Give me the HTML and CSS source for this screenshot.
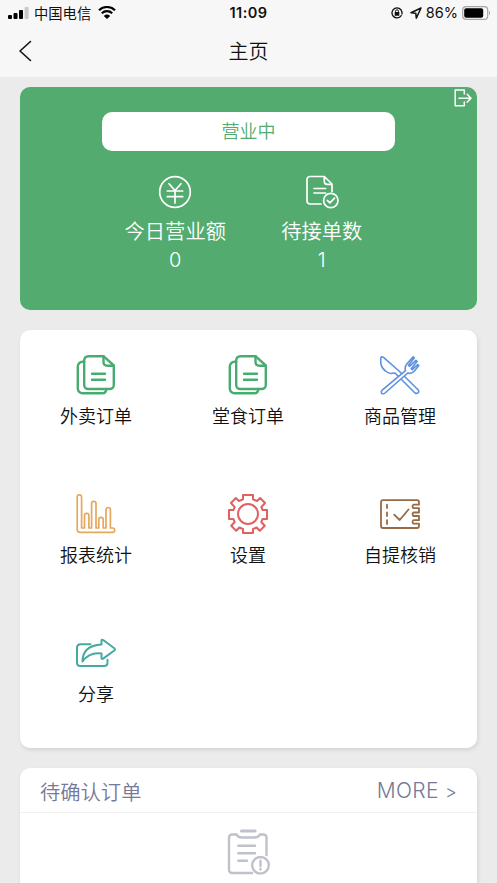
FILE: index.html
```html
<!DOCTYPE html>
<html lang="zh-CN">
<head>
<meta charset="utf-8">
<title>主页</title>
<link rel="stylesheet" href="styles.css">
</head>
<body>
<svg class="defs" width="0" height="0">
  <symbol id="docs" viewBox="0.5 0 40 40">
    <path d="M8.7 6.7H7A4.7 4.7 0 0 0 2.3 11.4V33.6A4.7 4.7 0 0 0 7 38.3H26.5Q30.8 38.3 30.8 34"/>
    <path d="M28 1.2H12.7a4 4 0 0 0-4 4V30a4 4 0 0 0 4 4h21.6a4 4 0 0 0 4-4V10.5Z"/>
    <path d="M28 1.2V7Q28 10.7 32 10.7H38.3M16.5 18.7H29.5M16.5 24.7H29.5"/>
  </symbol>
</svg>
<header class="header">
  <div class="status">
    <div class="carrier">
      <svg class="signal" viewBox="0 0 21 13"><rect x="0" y="9" width="4" height="4" rx="1"/><rect x="5.5" y="7" width="4" height="6" rx="1"/><rect x="11" y="4" width="4" height="9" rx="1"/><rect class="off" x="16.6" y="1" width="4" height="12" rx="1"/></svg>
      <span>中国电信</span>
      <svg class="wifi" viewBox="0 0 18 13"><path d="M1 4.2a11.6 11.6 0 0 1 16 0M3.8 7.3a7.5 7.5 0 0 1 10.4 0"/><path class="solid" d="M5.8 9.9a4.7 4.7 0 0 1 6.4 0L9 13Z"/></svg>
    </div>
    <time>11:09</time>
    <div class="power">
      <svg class="lock" viewBox="0 0 12 12"><path d="M10.2 8.6A5 5 0 1 1 10.9 4.8M11 5v2"/><path class="fine" d="M4.5 5.5V4.3a1.5 1.5 0 0 1 3 0v1.2"/><rect x="3.7" y="5.1" width="4.6" height="3.6" rx=".5"/></svg>
      <svg class="location" viewBox="0 0 12 12"><path d="M11 1 1 5.8l4.8.5.5 4.9Z"/></svg>
      <span>86%</span>
      <svg class="battery" viewBox="0 0 29 14"><rect class="shell" x=".7" y=".7" width="25" height="12.6" rx="3.4"/><rect x="2.2" y="2.2" width="19" height="9.6" rx="2"/><path class="tip" d="M27 4.7q2 2.3 0 4.6Z"/></svg>
    </div>
  </div>
  <nav class="nav">
    <svg class="back" viewBox="0 0 14 22"><path d="M12.5 1.5 2 11l10.5 9.5"/></svg>
    <h1>主页</h1>
  </nav>
</header>
<main class="content">
  <section class="summary">
    <svg class="exit" viewBox="0 0 18 18"><path d="M10.3 5V1H1.2V16.8H10.3V13M5 9.2H16.8M13.2 5.3l3.8 3.9-3.8 3.9"/></svg>
    <div class="open">营业中</div>
    <div class="stats">
      <div class="stat">
        <svg viewBox="0 0 34 34"><circle cx="17" cy="17" r="15.3"/><path d="M11 8.7 17 15.5 23 8.7M17 15.5V28M9.3 16H24.7M9.3 21.7H24.7"/></svg>
        <span>今日营业额</span><span class="value">0</span>
      </div>
      <div class="stat">
        <svg viewBox="0 0 34 34"><path d="M16 29H5a3 3 0 0 1-3-3V4.5a3 3 0 0 1 3-3H19.3L27 9V16.5M19.3 1.5V6.5Q19.3 9.3 22.3 9.3H27M9 13.5H20.5M9 18H20.5"/><circle cx="25.8" cy="25.5" r="7.2"/><path d="m22.3 25.3 2.6 2.6 4.6-4.8"/></svg>
        <span>待接单数</span><span class="value">1</span>
      </div>
    </div>
  </section>
  <section class="menu">
    <div class="item green"><svg><use href="#docs"/></svg><span>外卖订单</span></div>
    <div class="item green"><svg><use href="#docs"/></svg><span>堂食订单</span></div>
    <div class="item blue"><svg viewBox="0 0 40 40"><path d="M1 2.5C0 8 1.5 13 5.5 16Q9 19 12.5 18.3L15 18L35 38Q37 39 38.4 37.5Q39.2 36 38 34.7L19 16 3.5 2.3Q1.8 1 1 2.5Z"/><path class="fork" d="M25.5 15.6 2.2 35.2Q.6 37 1.8 38.3Q3.3 39.4 5 38L27.7 18Q31 19.3 34 16.5L38.8 10.5 37.8 9.5 32.2 14.7 31.2 13.7 37 6.4 35.9 5.3 29.5 11.3 28.5 10.3 34.3 2.8 33.2 1.8 27 8.8Q24.3 12 25.5 15.6Z"/></svg><span>商品管理</span></div>
    <div class="item orange"><svg viewBox="0 0 40 40"><path d="M1.2 3A2.2 2.2 0 0 1 5.6 3V34H8.5V21.5a2.2 2.2 0 0 1 4.4 0V34H15.6V9.5a2.2 2.2 0 0 1 4.4 0V34H22.8V25.5a2.2 2.2 0 0 1 4.4 0V34H30V15.7a2.2 2.2 0 0 1 4.4 0V34H36.5a2.2 2.2 0 0 1 0 4.4H4Q1.2 38.4 1.2 35.6Z"/></svg><span>报表统计</span></div>
    <div class="item red"><svg viewBox="0 0 40 40"><path d="M15 1H25V5.4L29 7 32.2 4 37 9 33.3 13.2 34.6 16H39V25H34.6L33.3 28 36.8 31.7 31.8 36.7 28.7 33.5 25 35V39H15V35L11.3 33.5 8.2 36.7 3.2 31.7 6.7 28 5.4 25H1V16H5.4L6.7 13.2 3 9 7.8 4 11 7 15 5.4Z"/><circle cx="20" cy="20" r="10"/></svg><span>设置</span></div>
    <div class="item brown"><svg viewBox="0 0 40 40"><path d="M3 6.2H37Q39 6.2 39 8.2V10.7H33.5Q31.5 12.5 33.5 14.2H39V18.5H33.5Q31.5 20.2 33.5 22H39V26.2H33.5Q31.5 28 33.5 29.7H39V32Q39 34 37 34H3Q1 34 1 32V8.2Q1 6.2 3 6.2Z"/><path d="M7 10.7V14M7 18.5V22M7 26.2V30M14.2 20.7 19.7 26 28.5 15.5"/></svg><span>自提核销</span></div>
    <div class="item teal"><svg viewBox="0 -5 40 40"><path d="M14.5 6.2H4.5Q1 6.2 1 9.7V24.5Q1 28 4.5 28H28Q31.5 28 31.5 24.5V21.7"/><path d="M25.5 6.5V2.8Q25.5 1 27.2 2L38.3 10.3Q39.6 11.4 38.3 12.5L27.2 20.6Q25.5 21.5 25.5 20V15.5Q13 14 6.5 23.5C6.5 13.5 12.5 7.3 25.5 6.5Z"/></svg><span>分享</span></div>
  </section>
  <section class="pending">
    <div class="pending-head"><span>待确认订单</span><a>MORE <i>&gt;</i></a></div>
    <svg class="empty" viewBox="0 0 44 48"><path class="bar" d="M14.5 3H28"/><path d="M9.5 6.5H5a3 3 0 0 0-3 3V42a3 3 0 0 0 3 3H25M33 6.5h3.5a3 3 0 0 1 3 3V27M9.5 6.5Q11 9.5 15 9.5H27.5Q31.5 9.5 33 6.5M11.3 17.8H28M11.3 25.2H28M11.3 32.7H20"/><circle cx="33.5" cy="37.3" r="8.3"/><path d="M33.5 32.7V38M33.5 41V41.5"/></svg>
  </section>
</main>
</body>
</html>
```
FILE: styles.css
```css
* { box-sizing: border-box; }
body {
  margin: 0;
  height: 883px;
  overflow: hidden;
  background: #ebebeb;
  color: #151515;
  font-family: "Noto Sans CJK SC", sans-serif;
}
svg {
  display: block;
  flex: none;
  fill: none;
  stroke: currentColor;
  stroke-width: 1.8;
  stroke-linecap: round;
  stroke-linejoin: round;
}
.defs { position: absolute; }
.header { height: 77px; background: #f7f7f7; color: #111; }
.status {
  display: grid;
  grid-template-columns: 1fr auto 1fr;
  align-items: center;
  height: 25px;
  padding: 0 6px 0 8px;
  font-size: 14.3px;
  line-height: 25px;
}
.status time { margin-right: 2px; font: 600 14.5px/25px Inter, sans-serif; letter-spacing: .5px; }
.carrier, .power { display: flex; align-items: center; }
.power { justify-content: flex-end; font: 14.5px/25px Inter, sans-serif; }
.signal { width: 21px; height: 13px; margin-right: 5px; fill: #000; stroke: none; }
.signal .off { fill: #c9c9c9; }
.wifi { width: 18px; height: 13px; margin-left: 7px; stroke: #000; stroke-width: 2.2; stroke-linecap: butt; }
.wifi .solid { fill: #000; stroke: none; }
.lock { width: 12px; height: 12px; margin-right: 7px; stroke-width: 1.3; }
.lock rect { fill: currentColor; stroke: none; }
.lock .fine { stroke-width: 1; }
.location { width: 12px; height: 12px; margin-right: 4px; stroke-width: 1.5; }
.battery { width: 29px; height: 14px; margin-left: 4px; fill: #000; stroke: none; }
.battery .shell { fill: none; stroke: #a5a5a5; stroke-width: 1.2; }
.battery .tip { fill: #999; }
.nav {
  display: grid;
  grid-template-columns: 40px 1fr 40px;
  align-items: center;
  height: 51px;
}
.back { width: 14px; height: 22px; margin-left: 18px; stroke-width: 1.6; }
.nav h1 { margin: 0; text-align: center; font-size: 20px; font-weight: 350; line-height: 30px; }
.content { padding: 10px 20px 0; }
.summary {
  position: relative;
  height: 223px;
  padding: 25px 82px 0;
  border-radius: 10px;
  background: #53ab6f;
  color: #fff;
}
.exit { position: absolute; top: 2px; right: 5px; width: 18px; height: 18px; stroke-width: 1.5; }
.open {
  height: 39px;
  border-radius: 10px;
  background: #fff;
  color: #53ab6f;
  text-align: center;
  font-size: 18px;
  font-weight: 350;
  line-height: 36px;
}
.stats { display: grid; grid-template-columns: 1fr 1fr; padding-top: 24px; }
.stat { display: flex; flex-direction: column; align-items: center; font-size: 20.3px; font-weight: 350; line-height: 29px; white-space: nowrap; }
.stat svg { width: 34px; height: 34px; margin-bottom: 7px; stroke-width: 1.7; }
.stat .value { padding-top: 1px; font-family: Inter, sans-serif; font-weight: 300; font-size: 20px; }
.menu, .pending { background: #fff; border-radius: 10px; box-shadow: 1px 2px 4px rgba(0, 0, 0, .1); }
.menu {
  display: grid;
  grid-template-columns: repeat(3, 152px);
  grid-template-rows: repeat(3, 139px);
  height: 418px;
  margin-top: 20px;
}
.item { display: flex; flex-direction: column; align-items: center; padding-top: 25px; font-size: 18px; font-weight: 350; line-height: 26px; }
.item svg { width: 40px; height: 40px; margin-bottom: 7px; }
.item span { color: #111; }
.green { color: #48ac70; }
.green svg { stroke-width: 2.4; }
.blue { color: #5c91dc; }
.blue svg { stroke-width: 1.6; }
.blue .fork { fill: #fff; }
.orange { color: #e5a85f; }
.orange svg { stroke-width: 1.7; }
.red { color: #df6261; }
.red svg, .teal svg { stroke-width: 2; }
.brown { color: #976a45; }
.teal { color: #45aaa0; }
.pending { height: 134px; margin-top: 20px; }
.pending-head {
  display: flex;
  justify-content: space-between;
  height: 45px;
  padding: 0 20px;
  border-bottom: 1px solid #f1f1f1;
  color: #75799a;
  font-size: 20.3px;
  font-weight: 350;
  line-height: 46px;
}
.pending-head a { font: 300 21px/46px Inter, sans-serif; letter-spacing: .3px; white-space: nowrap; }
.pending-head i { font-style: normal; font-size: 18px; }
.empty { width: 44px; height: 48px; margin: 15px auto 0; color: #bfc1cc; stroke-width: 2.4; }
.empty .bar { stroke-width: 3.2; }
```
